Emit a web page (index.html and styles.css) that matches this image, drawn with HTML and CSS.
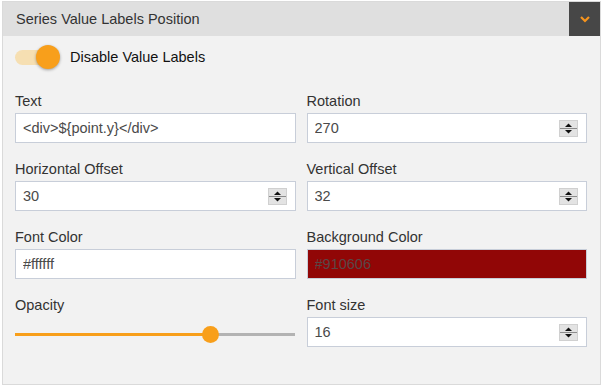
FILE: index.html
```html
<!DOCTYPE html>
<html lang="en">
<head>
    <meta charset="UTF-8">
    <title>Series Value Labels Position</title>
    <link rel="stylesheet" href="styles.css">
</head>
<body>
<div class="panel">
    <div class="panel-head">
        <span class="panel-title">Series Value Labels Position</span>
        <button class="collapse-btn">
            <svg width="10" height="7" viewBox="0 0 10 7"><polyline points="1,1 5,5 9,1" fill="none" stroke="#f7941d" stroke-width="2.2"/></svg>
        </button>
    </div>
    <div class="panel-body">
        <div class="switch-row">
            <span class="switch"><span class="switch-knob"></span></span>
            <span class="switch-text">Disable Value Labels</span>
        </div>

        <div class="form-grid">
            <div class="field">
                <div class="field-label">Text</div>
                <div class="input-box"><input class="input" type="text" value="&lt;div&gt;${point.y}&lt;/div&gt;"></div>
            </div>
            <div class="field">
                <div class="field-label">Rotation</div>
                <div class="input-box">
                    <input class="input" type="text" value="270">
                    <svg class="spinner" width="19" height="17" viewBox="0 0 19 17"><rect x="0.5" y="0.5" width="18" height="16" fill="#e3e3e3" stroke="#d0d0d0"/><line x1="1" y1="8.5" x2="18" y2="8.5" stroke="#8c8c8c"/><polygon points="6,7 13,7 9.5,3.5" fill="#111"/><polygon points="6,10 13,10 9.5,13.5" fill="#111"/></svg>
                </div>
            </div>
            <div class="field">
                <div class="field-label">Horizontal Offset</div>
                <div class="input-box">
                    <input class="input" type="text" value="30">
                    <svg class="spinner" width="19" height="17" viewBox="0 0 19 17"><rect x="0.5" y="0.5" width="18" height="16" fill="#e3e3e3" stroke="#d0d0d0"/><line x1="1" y1="8.5" x2="18" y2="8.5" stroke="#8c8c8c"/><polygon points="6,7 13,7 9.5,3.5" fill="#111"/><polygon points="6,10 13,10 9.5,13.5" fill="#111"/></svg>
                </div>
            </div>
            <div class="field">
                <div class="field-label">Vertical Offset</div>
                <div class="input-box">
                    <input class="input" type="text" value="32">
                    <svg class="spinner" width="19" height="17" viewBox="0 0 19 17"><rect x="0.5" y="0.5" width="18" height="16" fill="#e3e3e3" stroke="#d0d0d0"/><line x1="1" y1="8.5" x2="18" y2="8.5" stroke="#8c8c8c"/><polygon points="6,7 13,7 9.5,3.5" fill="#111"/><polygon points="6,10 13,10 9.5,13.5" fill="#111"/></svg>
                </div>
            </div>
            <div class="field">
                <div class="field-label">Font Color</div>
                <div class="input-box"><input class="input" type="text" value="#ffffff"></div>
            </div>
            <div class="field">
                <div class="field-label">Background Color</div>
                <div class="input-box color-box" style="background-color: #910606;"><input class="input" type="text" value="#910606"></div>
            </div>
            <div class="field">
                <div class="field-label">Opacity</div>
                <div class="slider">
                    <div class="slider-fill" style="width: 70%;"></div>
                    <div class="slider-thumb" style="left: calc(70% - 8.5px);"></div>
                </div>
            </div>
            <div class="field">
                <div class="field-label">Font size</div>
                <div class="input-box">
                    <input class="input" type="text" value="16">
                    <svg class="spinner" width="19" height="17" viewBox="0 0 19 17"><rect x="0.5" y="0.5" width="18" height="16" fill="#e3e3e3" stroke="#d0d0d0"/><line x1="1" y1="8.5" x2="18" y2="8.5" stroke="#8c8c8c"/><polygon points="6,7 13,7 9.5,3.5" fill="#111"/><polygon points="6,10 13,10 9.5,13.5" fill="#111"/></svg>
                </div>
            </div>
        </div>
    </div>
</div>
</body>
</html>
```

FILE: styles.css
```css
body {
    margin: 0;
    background: #fff;
    font-family: "Liberation Sans", Arial, sans-serif;
    font-size: 14.5px;
}
.panel {
    margin: 1px 2px;
    border: 1px solid #dadada;
    background: #f2f2f2;
}
.panel-head {
    display: flex;
    height: 34px;
    background: #dfdfdf;
}
.panel-title {
    flex: 1;
    padding-left: 13px;
    line-height: 34px;
    color: #333;
}
.collapse-btn {
    width: 31px;
    border: none;
    padding: 0;
    background: #474747;
    display: flex;
    align-items: center;
    justify-content: center;
}
.panel-body {
    padding: 8px 13px 37px 12px;
}
.switch-row {
    display: flex;
    align-items: center;
    height: 26px;
}
.switch {
    position: relative;
    width: 46px;
    height: 26px;
    margin-right: 9px;
}
.switch::before {
    content: "";
    position: absolute;
    left: 0;
    top: 6px;
    width: 36px;
    height: 15px;
    border-radius: 8px;
    background: #f6dfb2;
}
.switch-knob {
    position: absolute;
    left: 21px;
    top: 1px;
    width: 24px;
    height: 24px;
    border-radius: 50%;
    background: #f89f1b;
    box-shadow: 0 1px 3px rgba(0, 0, 0, 0.35);
}
.switch-text {
    color: #111;
}
.form-grid {
    margin-top: 23px;
    display: grid;
    grid-template-columns: 1fr 1fr;
    column-gap: 11px;
    row-gap: 18px;
}
.field-label {
    line-height: 16px;
    margin-bottom: 4px;
    color: #333;
}
.input-box {
    display: flex;
    align-items: center;
    height: 30px;
    box-sizing: border-box;
    border: 1px solid #c8ced9;
    background: #fff;
    padding: 0 8px 0 7px;
}
.input {
    flex: 1;
    min-width: 0;
    border: none;
    padding: 0;
    outline: none;
    background: transparent;
    font-family: "Liberation Sans", Arial, sans-serif;
    font-size: 14.5px;
    color: #4a4a4a;
}
.color-box .input {
    color: #5a4646;
}
.spinner {
    display: block;
}
.slider {
    position: relative;
    height: 3px;
    margin: 20px 1px 0 0;
    background: #b3b3b3;
}
.slider-fill {
    height: 100%;
    background: #f89f1b;
}
.slider-thumb {
    position: absolute;
    top: -7px;
    width: 17px;
    height: 17px;
    border-radius: 50%;
    background: #f89f1b;
}
```
